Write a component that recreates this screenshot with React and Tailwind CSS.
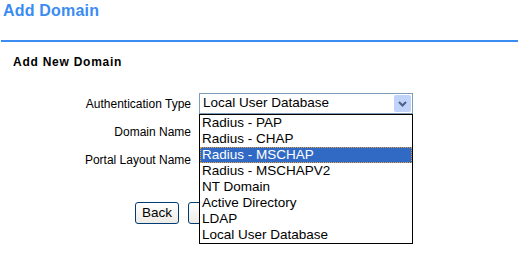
import React from "react";

const options = [
  "Radius - PAP",
  "Radius - CHAP",
  "Radius - MSCHAP",
  "Radius - MSCHAPV2",
  "NT Domain",
  "Active Directory",
  "LDAP",
  "Local User Database",
];

export default function App() {
  return (
    <main className="w-[518px] h-[267px] bg-white text-black overflow-hidden font-['Liberation_Sans',Arial,sans-serif]">
      <h1 className="pl-[3px] pt-[1px] h-[40px] text-[16px] leading-[20px] font-bold text-[#3b8cf2] tracking-[0.2px]">Add Domain</h1>
      <div className="ml-[1px] h-[2px] bg-[#3b8cf2]" />
      <h2 className="pl-[13px] pt-[13px] text-[12px] leading-[14px] font-bold tracking-[0.75px]">Add New Domain</h2>

      <div className="mt-[24px] grid grid-cols-[191px_214px] gap-x-[8px] gap-y-[7px] items-center text-[12px]">
        <div className="text-right">Authentication Type</div>
        <div className="relative">
          <div className="h-[21px] border border-[#7f9db9] flex items-center">
            <span className="pl-[3px] text-[13.5px]">Local User Database</span>
            <span className="ml-auto mr-[1px] w-[17px] h-[17px] rounded-[2px] bg-[#c1d3fb] flex items-center justify-center">
              <svg width="9" height="6" viewBox="0 0 9 6">
                <path d="M1 1 L4.5 4.5 L8 1" stroke="#4d6185" strokeWidth="2" fill="none" />
              </svg>
            </span>
          </div>
          <ul className="absolute z-10 left-0 top-[21px] w-[214px] border border-black bg-white text-[13.5px] leading-[16px]">
            {options.map((o) => (
              <li
                key={o}
                className={
                  o === "Radius - MSCHAP"
                    ? "h-[16px] pl-[2px] bg-[#316ac5] text-white outline-1 outline-dotted outline-[#e8a23a] -outline-offset-1"
                    : "h-[16px] pl-[2px]"
                }
              >
                {o}
              </li>
            ))}
          </ul>
        </div>
        <div className="text-right">Domain Name</div>
        <div className="h-[21px] border border-[#7f9db9]" />
        <div className="text-right">Portal Layout Name</div>
        <div className="h-[21px] border border-[#7f9db9]" />
      </div>

      <div className="mt-[32px] pl-[135px] flex gap-[9px] text-[13.5px]">
        <button className="h-[22px] w-[44px] rounded-[3px] border border-[#003c74] bg-gradient-to-b from-white to-[#ecebe6]">Back</button>
        <button className="h-[22px] w-[44px] rounded-[3px] border border-[#003c74] bg-gradient-to-b from-white to-[#ecebe6]" aria-label="Next" />
      </div>
    </main>
  );
}
